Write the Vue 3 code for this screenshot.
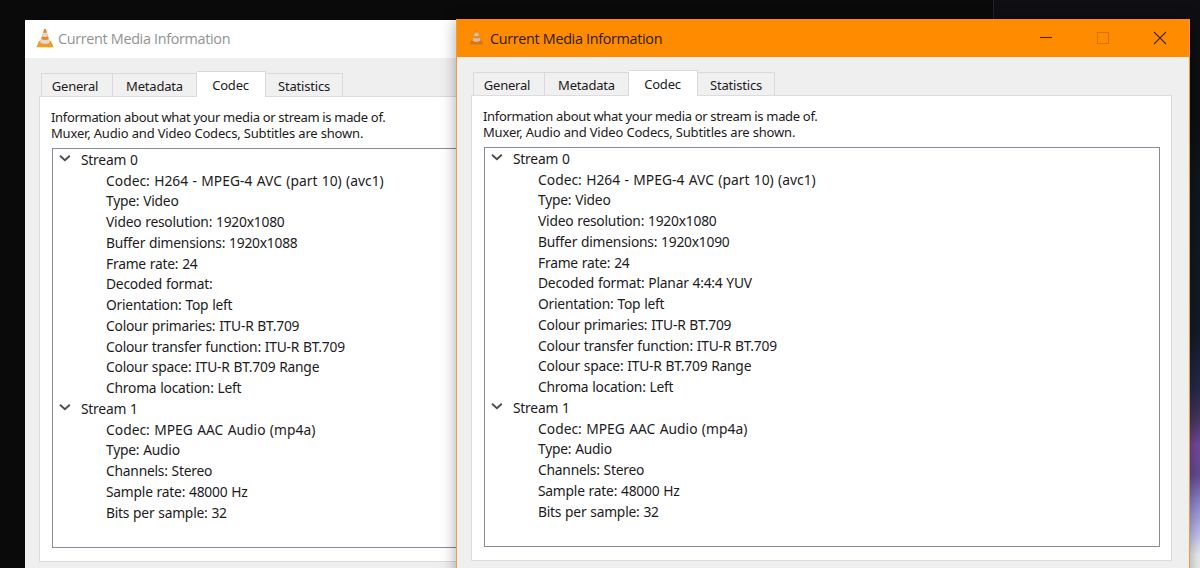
<template>
  <div class="desktop">
    <div class="desktop-edge"></div>

    <section
      v-for="win in windows"
      :key="win.id"
      class="window"
      :class="win.active ? 'window-active' : 'window-inactive'"
    >
      <header class="title-bar">
        <svg class="cone" width="18" height="20" viewBox="0 0 18 20">
          <path class="cone-base" d="M3 13h12l2.6 6.3H.4z" />
          <path class="cone-body" d="M8 1.2Q9 .2 10 1.2L14 14.5Q9 17.5 4 14.5z" />
          <path class="cone-stripe" d="M7 4.8h4l1.1 3.5Q9 9.6 5.9 8.3zM5.1 11Q9 12.8 12.9 11l1.1 3.5Q9 17.5 4 14.5z" />
        </svg>
        <h1>Current Media Information</h1>
        <div v-if="win.active" class="controls">
          <svg width="14" height="14" viewBox="0 0 14 14"><path d="M1 6.5h12" /></svg>
          <svg class="disabled" width="14" height="14" viewBox="0 0 14 14"><path d="M1.5 1.5h11v11h-11z" /></svg>
          <svg width="14" height="14" viewBox="0 0 14 14"><path d="M1 1l12 12M13 1L1 13" /></svg>
        </div>
      </header>

      <nav class="tabs">
        <button
          v-for="tab in tabs"
          :key="tab"
          :class="['tab', 'tab-' + tab.toLowerCase(), { selected: selected[win.id] === tab }]"
          @click="selected[win.id] = tab"
        >
          {{ tab }}
        </button>
      </nav>

      <div class="panel">
        <p class="description">
          Information about what your media or stream is made of.<br />
          <span>Muxer, Audio and Video Codecs, Subtitles are shown.</span>
        </p>
        <div class="tree">
          <div v-for="stream in win.streams" :key="stream.name">
            <div class="row stream">
              <svg class="chevron" width="12" height="8" viewBox="0 0 12 8"><path d="M1 1.7l4.9 4.4 4.9-4.4" /></svg>
              {{ stream.name }}
            </div>
            <div
              v-for="item in stream.items"
              :key="item"
              class="row item"
              :class="{ codec: item.startsWith('Codec') }"
            >
              {{ item }}
            </div>
          </div>
        </div>
      </div>
    </section>
  </div>
</template>

<script setup>
import { reactive } from 'vue';

const tabs = ['General', 'Metadata', 'Codec', 'Statistics'];

const selected = reactive({ back: 'Codec', front: 'Codec' });

const buildStreams = (buffer, format) => [
  {
    name: 'Stream 0',
    items: [
      'Codec: H264 - MPEG-4 AVC (part 10) (avc1)',
      'Type: Video',
      'Video resolution: 1920x1080',
      `Buffer dimensions: ${buffer}`,
      'Frame rate: 24',
      `Decoded format: ${format}`,
      'Orientation: Top left',
      'Colour primaries: ITU-R BT.709',
      'Colour transfer function: ITU-R BT.709',
      'Colour space: ITU-R BT.709 Range',
      'Chroma location: Left'
    ]
  },
  {
    name: 'Stream 1',
    items: [
      'Codec: MPEG AAC Audio (mp4a)',
      'Type: Audio',
      'Channels: Stereo',
      'Sample rate: 48000 Hz',
      'Bits per sample: 32'
    ]
  }
];

const windows = [
  { id: 'back', active: false, streams: buildStreams('1920x1088', '') },
  { id: 'front', active: true, streams: buildStreams('1920x1090', 'Planar 4:4:4 YUV') }
];
</script>

<style>
body {
  margin: 0;
  overflow: hidden;
}
</style>

<style scoped>
.desktop {
  position: relative;
  width: 1200px;
  height: 568px;
  overflow: hidden;
  background: #0a0a0a;
  font-family: "Noto Sans", "Open Sans", sans-serif;
  color: #1c1a22;
}

.desktop-edge {
  position: absolute;
  top: 0;
  right: 0;
  width: 207px;
  height: 568px;
  border-left: 1px solid #242426;
  background: linear-gradient(#0e0e13 0, #0e0e13 120px, #11161d 180px, #141a27 330px, #28284a 390px, #49365f 420px, #74489a 445px, #654a91 475px, #9289ce 505px, #b9b5ea 530px, #ececf0 555px, #eee 568px);
  box-sizing: border-box;
}

.window {
  position: absolute;
  display: flex;
  flex-direction: column;
  box-sizing: border-box;
  width: 734px;
  height: 590px;
  background: #efefef;
}

.window-inactive {
  left: 25px;
  top: 20px;
}

.window-active {
  left: 456px;
  top: 19px;
  border: 1px solid #ee9a3e;
  border-top-color: #ff8c00;
  box-shadow: 0 2px 14px rgba(0, 0, 0, 0.35);
}

.title-bar {
  display: flex;
  align-items: center;
  flex: none;
  box-sizing: border-box;
  height: 38px;
  padding-left: 11px;
  background: #fff;
}

.window-active .title-bar {
  height: 37px;
  padding: 0 20px 0 12px;
  background: #ff8c00;
}

.title-bar h1 {
  flex: 1;
  margin: 0 0 0 4px;
  font-family: "Open Sans", "Noto Sans", sans-serif;
  font-size: 14.4px;
  font-weight: 400;
  line-height: 20px;
  letter-spacing: -0.33px;
  color: #929292;
  white-space: nowrap;
}

.window-active h1 {
  margin-left: 6px;
  color: #2e1a02;
}

.cone {
  flex: none;
  margin-top: -3px;
}

.window-active .cone {
  width: 15px;
  height: 16px;
  margin-top: -4px;
}

.cone-base {
  fill: #f49a1c;
}

.cone-body {
  fill: #e88724;
}

.cone-stripe {
  fill: #dcd9d8;
}

.window-active .cone-base {
  fill: #d5761b;
}

.window-active .cone-stripe {
  fill: #d9bda0;
}

.controls {
  display: flex;
  gap: 43px;
  margin-top: -2px;
  margin-right: 2px;
}

.controls path {
  fill: none;
  stroke: #4a2703;
  stroke-width: 1.1;
}

.controls .disabled path {
  stroke: #d27609;
}

.tabs {
  display: flex;
  align-items: flex-end;
  flex: none;
  height: 38px;
  margin-left: 16px;
}

.tab {
  box-sizing: border-box;
  height: 23px;
  padding: 1px 0 0;
  border: 1px solid #d9d9d9;
  border-bottom: 0;
  background: #f0f0f0;
  color: inherit;
  font-family: inherit;
  font-size: 13px;
  line-height: 18px;
  letter-spacing: -0.2px;
}

.tab + .tab {
  border-left: 0;
}

.tab-general {
  width: 72px;
  padding-right: 4px;
}

.tab-metadata {
  width: 84px;
}

.tab-codec {
  width: 69px;
  padding-right: 1px;
}

.tab-statistics {
  width: 77px;
}

.tab.selected {
  z-index: 1;
  height: 26px;
  margin-bottom: -1px;
  padding-bottom: 1px;
  background: #fff;
}

.panel {
  display: flex;
  flex-direction: column;
  flex: none;
  box-sizing: border-box;
  width: 701px;
  height: 466px;
  margin-left: 14px;
  padding: 12px 11px 13px 12px;
  border: 1px solid #dcdcdc;
  background: #fff;
}

.description {
  margin: 0 0 7px -1px;
  height: 32px;
  font-size: 13px;
  line-height: 16px;
  letter-spacing: -0.32px;
  white-space: nowrap;
}

.description span {
  letter-spacing: -0.17px;
}

.tree {
  flex: 1;
  box-sizing: border-box;
  border: 1px solid #868d97;
  font-size: 13.8px;
  letter-spacing: -0.22px;
  word-spacing: 0.5px;
}

.row {
  display: flex;
  align-items: center;
  height: 20.75px;
  line-height: 21px;
  white-space: nowrap;
}

.stream {
  padding-left: 6px;
  gap: 10px;
}

.item {
  padding-left: 53px;
}

.codec {
  letter-spacing: 0.03px;
  word-spacing: 0.7px;
}

.chevron {
  margin-top: -2px;
}

.chevron path {
  fill: none;
  stroke: #4c4c4c;
  stroke-width: 1.9;
}
</style>
